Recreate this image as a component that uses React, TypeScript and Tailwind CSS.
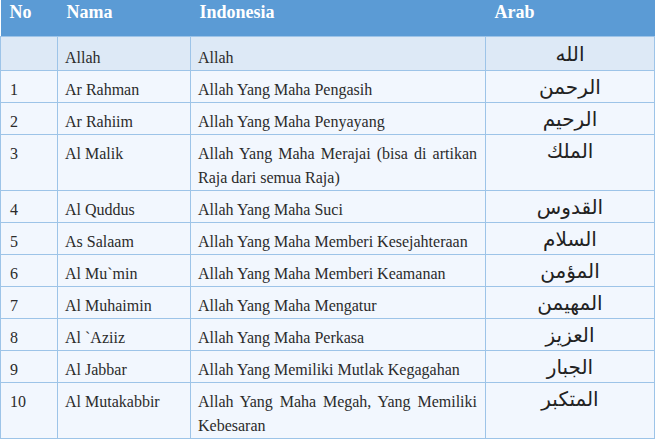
import React from "react";

const rows: [string, string, string, string][] = [
  ["", "Allah", "Allah", "الله"],
  ["1", "Ar Rahman", "Allah Yang Maha Pengasih", "الرحمن"],
  ["2", "Ar Rahiim", "Allah Yang Maha Penyayang", "الرحيم"],
  ["3", "Al Malik", "Allah Yang Maha Merajai (bisa di artikan Raja dari semua Raja)", "الملك"],
  ["4", "Al Quddus", "Allah Yang Maha Suci", "القدوس"],
  ["5", "As Salaam", "Allah Yang Maha Memberi Kesejahteraan", "السلام"],
  ["6", "Al Mu`min", "Allah Yang Maha Memberi Keamanan", "المؤمن"],
  ["7", "Al Muhaimin", "Allah Yang Maha Mengatur", "المهيمن"],
  ["8", "Al `Aziiz", "Allah Yang Maha Perkasa", "العزيز"],
  ["9", "Al Jabbar", "Allah Yang Memiliki Mutlak Kegagahan", "الجبار"],
  ["10", "Al Mutakabbir", "Allah Yang Maha Megah, Yang Memiliki Kebesaran", "المتكبر"],
];

const serif = "font-['Liberation_Serif','Times_New_Roman',serif]";

export default function App() {
  return (
    <div className={`w-[655px] h-[440px] overflow-hidden bg-white ${serif}`}>
      <table className={`table-fixed border-collapse w-[654px] text-[#2b2b2b] ${serif}`}>
        <colgroup>
          <col className="w-[57px]" />
          <col className="w-[133px]" />
          <col className="w-[295px]" />
          <col className="w-[169px]" />
        </colgroup>
        <thead>
          <tr className="bg-[#5b9bd5] h-[36px]">
            {["No", "Nama", "Indonesia", "Arab"].map((h) => (
              <th
                key={h}
                className={`text-left align-top pl-[9px] pt-[3px] text-[18px] leading-[18px] font-bold text-white ${serif}`}
              >
                {h}
              </th>
            ))}
          </tr>
        </thead>
        <tbody>
          {rows.map((r, i) => {
            const first = i === 0;
            const bg = first ? "bg-[#dde9f6]" : "bg-[#f2f7fe]";
            const pt = first ? "pt-[9px]" : "pt-[7px]";
            return (
              <tr key={i} className={bg}>
                <td className={`border border-[#9dc4e8] align-top pl-[9px] pr-2 ${pt} pb-0 text-[16px] leading-6 ${serif}`}>
                  {r[0]}
                </td>
                <td className={`border border-[#9dc4e8] align-top pl-[7px] pr-2 ${pt} pb-0 text-[16px] leading-6 ${serif}`}>
                  {r[1]}
                </td>
                <td className={`border border-[#9dc4e8] align-top pl-[7px] pr-[8px] ${pt} pb-0 text-[16px] leading-6 text-justify ${serif}`}>
                  {r[2]}
                </td>
                <td
                  className={`border border-[#9dc4e8] align-top text-center ${first ? "pt-[5px]" : "pt-[4px]"} pb-0 text-[20px] leading-6 text-[#222222] font-['DejaVu_Sans',sans-serif]`}
                  dir="rtl"
                >
                  {r[3]}
                </td>
              </tr>
            );
          })}
        </tbody>
      </table>
    </div>
  );
}
